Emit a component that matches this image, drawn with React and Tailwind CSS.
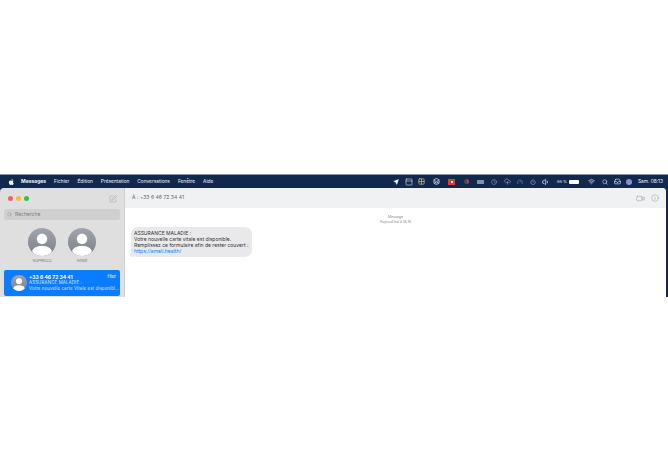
import React from "react";
import {
  Search,
  SquarePen,
  Video,
  Info,
  Send,
  Volume1,
  Wifi,
  Layers,
  Clock,
  CloudUpload,
  Gauge,
  Power,
  PanelTop,
  Grid2x2,
  Inbox,
} from "lucide-react";

const menus = ["Fichier", "Édition", "Présentation", "Conversations", "Fenêtre", "Aide"];

const Avatar = ({ size }) => (
  <svg width={size} height={size} viewBox="0 0 40 40" className="shrink-0">
    <defs>
      <linearGradient id={`av${size}`} x1="0" y1="0" x2="0" y2="1">
        <stop offset="0" stopColor="#a0a4af" />
        <stop offset="1" stopColor="#7b7f8a" />
      </linearGradient>
      <clipPath id={`clip${size}`}>
        <circle cx="20" cy="20" r="20" />
      </clipPath>
    </defs>
    <circle cx="20" cy="20" r="20" fill={`url(#av${size})`} />
    <g clipPath={`url(#clip${size})`} fill="#fff">
      <circle cx="20" cy="15.5" r="7.5" />
      <ellipse cx="20" cy="33" rx="14" ry="7.5" />
    </g>
  </svg>
);

const Pinned = ({ name }) => (
  <div className="flex flex-col items-center w-[40px]">
    <Avatar size={28} />
    <span className="mt-[2px] text-[4px] leading-[6px] text-[#777]">{name}</span>
  </div>
);

const Cell = ({ className = "w-[13px]", children }) => (
  <span className={`flex items-center justify-center shrink-0 h-[8px] ${className}`}>{children}</span>
);

const App = () => (
  <div className="w-[668px] h-[472px] bg-white overflow-hidden font-['Inter','Liberation_Sans',sans-serif]">
    <div className="h-[174px]" />

    {/* menu bar */}
    <div className="h-[14px] bg-[#12294f] border-t border-[#8e99a8] flex items-center text-[#f2f4f8] text-[4.8px] pl-[8px] pr-[5px]">
      <svg width="7" height="8" viewBox="0 0 24 24" fill="#fff">
        <path d="M17.05 12.54c-.03-2.6 2.13-3.85 2.23-3.91-1.21-1.78-3.1-2.02-3.78-2.05-1.61-.16-3.14.95-3.95.95-.82 0-2.08-.93-3.42-.9-1.76.03-3.38 1.02-4.29 2.6-1.83 3.17-.47 7.87 1.31 10.44.87 1.26 1.91 2.67 3.27 2.62 1.31-.05 1.81-.85 3.4-.85 1.58 0 2.03.85 3.42.82 1.41-.02 2.31-1.28 3.17-2.55 1-1.46 1.41-2.88 1.44-2.95-.03-.01-2.77-1.06-2.8-4.22zM14.45 4.9c.72-.88 1.21-2.09 1.08-3.3-1.04.04-2.3.69-3.05 1.57-.67.77-1.25 2-1.1 3.19 1.16.09 2.35-.59 3.07-1.46z" />
      </svg>
      <span className="ml-[6px] font-bold text-[5px]">Messages</span>
      <div className="flex gap-[8px] ml-[8px]">
        {menus.map((m) => (
          <span key={m}>{m}</span>
        ))}
      </div>
      <div className="ml-auto flex items-center">
        <Cell><Send size={6} fill="#fff" strokeWidth={1} /></Cell>
        <Cell><PanelTop size={8} strokeWidth={1.6} /></Cell>
        <Cell><Grid2x2 size={7} strokeWidth={2} className="text-[#e4dc9a]" /></Cell>
        <Cell className="w-[16px]"><Layers size={7} strokeWidth={2.4} /></Cell>
        <Cell className="w-[15px]">
          <span className="w-[7px] h-[6px] bg-[#e23b2e] flex items-center justify-center">
            <span className="w-[2px] h-[2px] bg-white" />
          </span>
        </Cell>
        <Cell className="w-[15px]">
          <span className="w-[5px] h-[5px] rounded-full bg-[#3c4a60] border-r-2 border-r-[#d33]" />
        </Cell>
        <Cell><span className="w-[7px] h-[4px] bg-[#7f90a8]" /></Cell>
        <Cell className="w-[14px]"><Clock size={6} strokeWidth={1.4} className="text-[#cfd6e0]" /></Cell>
        <Cell className="w-[12px]"><CloudUpload size={7} strokeWidth={1.6} className="text-[#c2ccd8]" /></Cell>
        <Cell><Gauge size={6} strokeWidth={1.4} className="text-[#cfd6e0]" /></Cell>
        <Cell><Power size={6} strokeWidth={1.6} /></Cell>
        <Cell><Volume1 size={8} strokeWidth={2} /></Cell>
        <span className="flex items-center gap-[2px] text-[4px] ml-[5px] w-[28px]">
          66 %
          <span className="w-[10px] h-[4px] bg-white rounded-[1px]" />
        </span>
        <Cell><Wifi size={7} strokeWidth={2} /></Cell>
        <Cell><Search size={6} strokeWidth={2} /></Cell>
        <Cell className="w-[12px]"><Inbox size={7} strokeWidth={2} /></Cell>
        <Cell className="w-[12px]">
          <span className="w-[6px] h-[6px] rounded-full bg-gradient-to-br from-[#e65aa0] via-[#7a8fe0] to-[#4ec5c0]" />
        </Cell>
        <span className="ml-[3px] whitespace-nowrap">Sam. 08:13</span>
      </div>
    </div>

    {/* window */}
    <div className="h-[109px] flex bg-[#12294f]">
      <div className="w-[125px] bg-[#dfdfe0] rounded-tl-[4px] border-r border-[#cfcfcf] flex flex-col">
        <div className="h-[21px] flex items-center pl-[8px] pr-[7px] gap-[3px]">
          <span className="w-[5px] h-[5px] rounded-full bg-[#fb5f57]" />
          <span className="w-[5px] h-[5px] rounded-full bg-[#fcbc2e]" />
          <span className="w-[5px] h-[5px] rounded-full bg-[#28c83f]" />
          <SquarePen size={8} strokeWidth={1} className="ml-auto text-[#8a8a8a]" />
        </div>
        <div className="mx-[4px] h-[11px] rounded-[2px] bg-[#cfcfd0] flex items-center pl-[3px] gap-[3px] text-[5px] text-[#808080]">
          <Search size={5} strokeWidth={1.5} />
          Recherche
        </div>
        <div className="flex justify-center mt-[8px]">
          <Pinned name="SOPRECO" />
          <Pinned name="Ameli" />
        </div>
        <div className="mx-[4px] mt-[6px] h-[26px] rounded-[2px] bg-[#0a7cff] text-white flex items-center pl-[7px] pr-[4px] gap-[2px]">
          <Avatar size={16} />
          <div className="flex-1 min-w-0 text-[4.4px] leading-[6px] whitespace-nowrap">
            <div className="flex justify-between">
              <span className="font-bold text-[5px]">+33 6 46 72 34 41</span>
              <span>Hier</span>
            </div>
            <div className="text-[#d6e8ff] tracking-[0.15px]">ASSURANCE MALADIE :</div>
            <div className="text-[#d6e8ff] tracking-[0.1px]">Votre nouvelle carte Vitale est disponibl...</div>
          </div>
        </div>
      </div>

      <div className="flex-1 bg-white mr-[2px] rounded-tr-[4px] overflow-hidden flex flex-col">
        <div className="h-[20px] bg-[#f0f1f3] flex items-center pl-[7px] pr-[7px] text-[5px] text-[#666] tracking-[0.05px]">
          <span>À : +33 6 46 72 34 41</span>
          <Video size={9} strokeWidth={1} className="ml-auto text-[#777]" />
          <Info size={8} strokeWidth={1} className="ml-[6px] text-[#777]" />
        </div>
        <div className="flex flex-col items-center mt-[7px] text-[3.5px] leading-[4.5px] text-[#888]">
          <span>Message</span>
          <span>Aujourd'hui à 16:16</span>
        </div>
        <div className="relative ml-[6px] mt-[3px] w-[121px] h-[30px] rounded-[7px] bg-[#e9e9eb] pl-[3px] pt-[3px] text-[5px] leading-[6px] text-[#333]">
          <span className="absolute left-[-1px] bottom-0 w-[4px] h-[4px] rounded-bl-[3px] bg-[#e9e9eb]" />
          <div>ASSURANCE MALADIE :</div>
          <div>Votre nouvelle carte vitale est disponible.</div>
          <div className="whitespace-nowrap">Remplissez ce formulaire afin de rester couvert :</div>
          <div className="text-[#0a7cff]">https://ameli.health/</div>
        </div>
      </div>
    </div>
  </div>
);

export default App;
